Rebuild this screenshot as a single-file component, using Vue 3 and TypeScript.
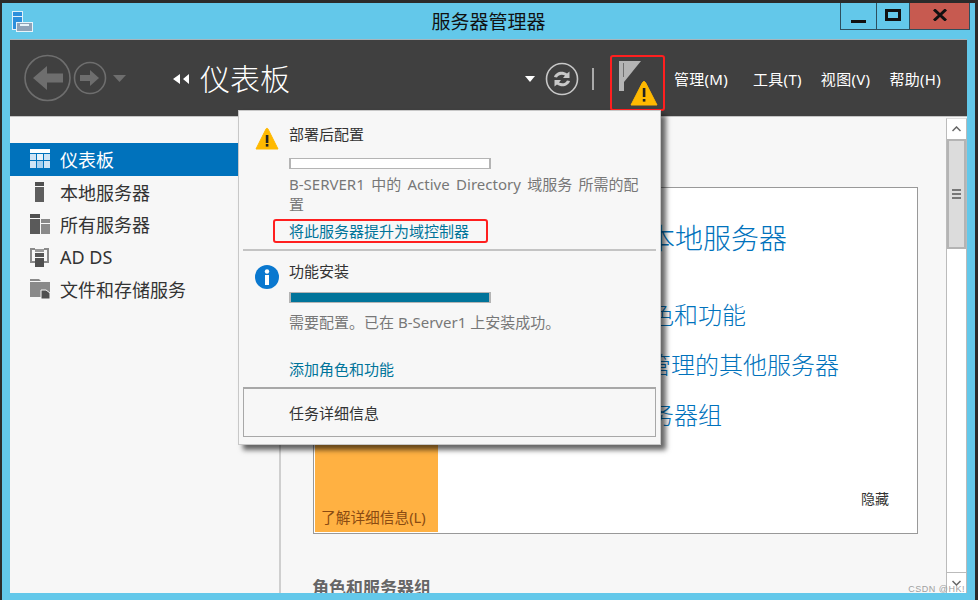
<script setup lang="ts">
const sideItems = [
  { name: '仪表板', icon: 'dash', active: true },
  { name: '本地服务器', icon: 'local', active: false },
  { name: '所有服务器', icon: 'all', active: false },
  { name: 'AD DS', icon: 'ad', active: false },
  { name: '文件和存储服务', icon: 'file', active: false },
]
const menus = ['管理(M)', '工具(T)', '视图(V)', '帮助(H)']
</script>

<template>
  <div class="window">
    <header class="titlebar">
      <svg class="app-icon" width="21" height="21" viewBox="0 0 21 21">
        <rect x="0.5" y="0.5" width="10" height="18" fill="#2c8fdc" stroke="#dff1fa" />
        <rect x="1" y="5" width="9" height="1" fill="#dff1fa" />
        <rect x="4.5" y="11.5" width="16" height="9" fill="#8fa3b8" stroke="#e8f4fa" />
        <rect x="8" y="13" width="9" height="2" fill="#e8f4fa" />
      </svg>
      <div class="title">服务器管理器</div>
      <div class="win-btns">
        <div class="win-btn min"><span class="min-glyph"></span></div>
        <div class="win-btn max"><span class="max-glyph"></span></div>
        <div class="win-btn close">
          <svg width="14" height="12" viewBox="0 0 14 12"><path d="M1 0.5L13 11.5M13 0.5L1 11.5" stroke="#111" stroke-width="3" /></svg>
        </div>
      </div>
    </header>

    <nav class="navbar">
      <svg class="history" width="106" height="50" viewBox="0 0 106 50">
        <circle cx="23.5" cy="25" r="22.5" fill="none" stroke="#6e6e6e" stroke-width="1.6" />
        <path d="M9 25L23 13V20.5H39V29.5H23V37Z" fill="#6e6e6e" />
        <circle cx="66" cy="25" r="15.5" fill="none" stroke="#6e6e6e" stroke-width="1.6" />
        <path d="M75 25L66 17V22H56V28H66V33Z" fill="#6e6e6e" />
        <path d="M89 22H102L95.500 29Z" fill="#6e6e6e" />
      </svg>
      <svg class="crumb-arrows" width="16" height="10" viewBox="0 0 16 10">
        <path d="M7 0V10L0 5ZM16 0V10L10 5Z" fill="#fff" />
      </svg>
      <div class="crumb">仪表板</div>
      <div class="nav-right">
        <svg class="refresh-caret" width="10" height="6" viewBox="0 0 10 6"><path d="M0 0H10L5 6Z" fill="#fff" /></svg>
        <svg class="refresh" width="34" height="34" viewBox="0 0 34 34">
          <circle cx="17" cy="17" r="15.500" fill="none" stroke="#c8c8c8" stroke-width="1.600" />
          <path d="M9 15C10.500 10 17 8 22 11.500L24.500 9.500V16H18L20 13.500C17 12 13.500 12.500 12 15.500Z" fill="#c8c8c8" />
          <path d="M25 19C23.500 24 17 26 12 22.500L9.500 24.500V18H16L14 20.500C17 22 20.500 21.500 22 18.500Z" fill="#c8c8c8" />
        </svg>
        <span class="sep"></span>
        <div class="flag-box">
          <svg width="48" height="49" viewBox="0 0 48 49">
            <path d="M6 3H11V33H6Z" fill="#b4b4b4" />
            <rect x="10" y="5" width="1" height="14" fill="#707070" />
            <path d="M11 3H28L11 24Z" fill="#b4b4b4" />
            <path d="M18 47L29.500 24.500C30.200 23.200 31.800 23.200 32.500 24.500L44 47Z" fill="#ffb900" stroke="#ffb900" stroke-linejoin="round" />
            <rect x="29.800" y="30" width="2.600" height="9" fill="#222" />
            <rect x="29.800" y="41" width="2.600" height="2.600" fill="#222" />
          </svg>
        </div>
        <div class="menus">
          <span v-for="m in menus" :key="m" class="menu">{{ m }}</span>
        </div>
      </div>
    </nav>

    <div class="body">
      <aside class="sidebar">
        <div v-for="item in sideItems" :key="item.name" class="side-item" :class="{ active: item.active }">
          <svg class="side-icon" width="20" height="20" viewBox="0 0 20 20">
            <template v-if="item.icon === 'dash'">
              <rect x="0" y="0" width="20" height="4" fill="#fff" />
              <rect x="0" y="5" width="6" height="6" fill="#cfe4f5" />
              <rect x="7" y="5" width="6" height="6" fill="#e8f2fa" />
              <rect x="14" y="5" width="6" height="6" fill="#cfe4f5" />
              <rect x="0" y="12" width="6" height="7" fill="#cfe4f5" />
              <rect x="7" y="12" width="6" height="7" fill="#a9d0ee" />
              <rect x="14" y="12" width="6" height="7" fill="#cfe4f5" />
            </template>
            <template v-else-if="item.icon === 'local'">
              <rect x="5" y="0" width="9" height="4" fill="#505050" />
              <rect x="5" y="5" width="9" height="15" fill="#5e5e5e" />
            </template>
            <template v-else-if="item.icon === 'all'">
              <rect x="0" y="0" width="10" height="4" fill="#505050" />
              <rect x="0" y="5" width="10" height="15" fill="#5a5a5a" />
              <rect x="11" y="5" width="9" height="4" fill="#888" />
              <rect x="11" y="10" width="9" height="10" fill="#8a8a8a" />
            </template>
            <template v-else-if="item.icon === 'ad'">
              <path d="M0 1H5V3H2V14H5V16H0ZM14 1H19V16H14V14H17V3H14Z" fill="#8a8a8a" />
              <rect x="5" y="2" width="9" height="3" fill="#999" />
              <rect x="5" y="6" width="9" height="4" fill="#555" />
              <rect x="5" y="11" width="9" height="9" fill="#505050" />
            </template>
            <template v-else>
              <path d="M0 0H9L11 2H0Z" fill="#8a8a8a" />
              <rect x="0" y="3" width="20" height="15" fill="#8a8a8a" />
              <path d="M11 11H16L20 14V20H11Z" fill="#505050" stroke="#f7f7f7" />
            </template>
          </svg>
          <span>{{ item.name }}</span>
        </div>
      </aside>

      <main class="content">
        <section class="welcome">
          <div class="tile">了解详细信息(L)</div>
          <div class="welcome-body">
            <div class="quick-title">配置此本地服务器</div>
            <div class="quick-link">添加角色和功能</div>
            <div class="quick-link">添加要管理的其他服务器</div>
            <div class="quick-link">创建服务器组</div>
            <div class="hide-link">隐藏</div>
          </div>
        </section>
        <h2 class="group-head">角色和服务器组</h2>
      </main>

      <div class="scrollbar">
        <div class="sb-btn">
          <svg width="9" height="6" viewBox="0 0 9 6"><path d="M0.500 5L4.500 1L8.500 5" fill="none" stroke="#666" stroke-width="1.500" /></svg>
        </div>
        <div class="sb-thumb"><span></span><span></span><span></span></div>
        <div class="sb-track"></div>
        <div class="sb-btn down">
          <svg width="9" height="6" viewBox="0 0 9 6"><path d="M0.500 1L4.500 5L8.500 1" fill="none" stroke="#666" stroke-width="1.500" /></svg>
        </div>
      </div>
    </div>

    <div class="popup">
      <div class="note first">
        <svg class="note-icon" width="24" height="23" viewBox="0 0 24 23">
          <path d="M1 22L11 2C11.500 1 12.500 1 13 2L23 22Z" fill="#ffb900" stroke="#ffb900" stroke-linejoin="round" />
          <rect x="10.800" y="8" width="2.600" height="8" fill="#222" />
          <rect x="10.800" y="17" width="2.600" height="2.600" fill="#222" />
        </svg>
        <div class="note-body">
          <div class="note-title">部署后配置</div>
          <div class="bar"></div>
          <p class="note-text">B-SERVER1 中的 Active Directory 域服务 所需的配置</p>
          <div class="promote"><span class="link">将此服务器提升为域控制器</span></div>
        </div>
      </div>
      <div class="divider"></div>
      <div class="note second">
        <svg class="note-icon" width="24" height="24" viewBox="0 0 24 24">
          <circle cx="12" cy="12" r="12" fill="#0a78cf" />
          <rect x="10" y="10" width="4" height="10" fill="#fff" />
          <circle cx="12" cy="6.500" r="2.200" fill="#fff" />
        </svg>
        <div class="note-body">
          <div class="note-title">功能安装</div>
          <div class="bar full"></div>
          <p class="note-text">需要配置。已在 B-Server1 上安装成功。</p>
          <div class="add-role"><span class="link">添加角色和功能</span></div>
        </div>
      </div>
      <div class="task-details">任务详细信息</div>
    </div>

    <div class="watermark">CSDN @HK!</div>
  </div>
</template>

<style>
html, body {
  margin: 0;
  background: #2b2b2b;
}
</style>

<style scoped>
.window {
  position: relative;
  box-sizing: border-box;
  width: 978px;
  height: 600px;
  padding: 0 8px 7px;
  margin: 0;
  border-top: 3px solid #2b2b2b;
  border-left: 2px solid #2b2b2b;
  border-right: 3px solid #2b2b2b;
  background: #63c8ea;
  display: flex;
  flex-direction: column;
  overflow: hidden;
  font-family: "Noto Sans", "Noto Sans CJK SC", sans-serif;
  color: #333;
}

.titlebar {
  position: relative;
  height: 36px;
  flex: none;
  display: flex;
  justify-content: center;
  align-items: flex-start;
}

.app-icon {
  position: absolute;
  left: 2px;
  top: 8px;
}

.title {
  font-size: 19px;
  line-height: 38px;
  color: #111;
}

.win-btns {
  position: absolute;
  right: -3px;
  top: 0;
  display: flex;
  height: 27px;
}

.win-btn {
  box-sizing: border-box;
  height: 27px;
  border: 1px solid #2d4f5e;
  border-top: 0;
  display: flex;
  align-items: center;
  justify-content: center;
}

.min {
  width: 37px;
  align-items: flex-end;
  padding-bottom: 6px;
}

.min-glyph {
  width: 15px;
  height: 3px;
  background: #111;
}

.max {
  width: 33px;
  border-left: 0;
}

.max-glyph {
  box-sizing: border-box;
  width: 16px;
  height: 12px;
  border: 3px solid #111;
  margin-top: -3px;
}

.close {
  width: 60px;
  border-left: 0;
  background: #c75a50;
  padding-bottom: 2px;
}

.navbar {
  flex: none;
  height: 78px;
  box-sizing: border-box;
  border-top: 1px solid #a8b4ba;
  border-bottom: 1px solid #c4c4c4;
  background: #404040;
  display: flex;
  align-items: center;
  color: #fff;
}

.history {
  margin-left: 14px;
  flex: none;
}

.crumb-arrows {
  margin-left: 43px;
  margin-top: 2px;
}

.crumb {
  margin-left: 11px;
  font-size: 30px;
  font-weight: 300;
  line-height: 40px;
  margin-top: 2px;
}

.nav-right {
  margin-left: auto;
  display: flex;
  align-items: center;
  margin-top: 2px;
}

.refresh {
  margin-left: 10px;
}

.sep {
  width: 2px;
  height: 22px;
  background: #aaa;
  margin-left: 13px;
}

.flag-box {
  box-sizing: border-box;
  width: 55px;
  height: 56px;
  margin-left: 16px;
  border: 2.500px solid #ff1f1f;
  border-radius: 3px;
  display: flex;
  align-items: center;
  justify-content: center;
  margin-top: 7px;
}

.menus {
  display: flex;
  margin-left: 9px;
  margin-right: 26px;
  gap: 19px;
  font-size: 15px;
  letter-spacing: 0.300px;
  line-height: 20px;
}

.menu:first-child {
  margin-right: 6px;
}

.body {
  flex: 1;
  min-height: 0;
  display: flex;
  background: #f7f7f7;
}

.sidebar {
  box-sizing: border-box;
  width: 271px;
  flex: none;
  padding-top: 26px;
  border-right: 2px solid #cfcfcf;
}

.side-item {
  height: 32.500px;
  display: flex;
  align-items: center;
  padding-left: 20px;
  font-size: 18px;
  color: #333;
}

.side-item.active {
  background: #0072bc;
  color: #fff;
}

.side-icon {
  margin-right: 10px;
  flex: none;
}

.content {
  flex: 1;
  min-width: 0;
  padding: 70px 28px 0 32px;
  overflow: hidden;
}

.welcome {
  box-sizing: border-box;
  width: 605px;
  height: 347px;
  border: 1px solid #999;
  padding: 1px;
  background: #fff;
  display: flex;
}

.tile {
  box-sizing: border-box;
  width: 123px;
  flex: none;
  background: #ffb142;
  color: #8a4b12;
  font-size: 14.700px;
  line-height: 20px;
  padding: 0 0 5px 6px;
  display: flex;
  align-items: flex-end;
}

.welcome-body {
  flex: 1;
  position: relative;
  padding: 29px 0 0 136px;
  display: flex;
  flex-direction: column;
  color: #0072bc;
}

.quick-title {
  font-size: 28px;
  font-weight: 300;
  line-height: 40px;
  margin-left: -11px;
  margin-bottom: 40px;
}

.quick-link {
  font-size: 24px;
  font-weight: 300;
  line-height: 34px;
  margin-bottom: 16px;
  margin-left: 4px;
}

.quick-link:nth-of-type(3) {
  margin-left: 1px;
}

.hide-link {
  margin-top: auto;
  margin-bottom: 23px;
  align-self: flex-end;
  margin-right: 27px;
  font-size: 14px;
  line-height: 20px;
  color: #333;
}

.group-head {
  margin: 42px 0 0 -1px;
  font-size: 17px;
  line-height: 24px;
  font-weight: 700;
  color: #666;
}

.scrollbar {
  box-sizing: border-box;
  width: 21px;
  flex: none;
  margin-top: 1px;
  border-left: 1px solid #bbb;
  border-right: 1px solid #bbb;
  border-top: 1px solid #ddd;
  background: #fff;
  display: flex;
  flex-direction: column;
}

.sb-btn {
  height: 20px;
  flex: none;
  display: flex;
  align-items: center;
  justify-content: center;
}

.sb-btn.down {
  border-top: 1px solid #bbb;
  height: 20px;
}

.sb-thumb {
  box-sizing: border-box;
  height: 110px;
  flex: none;
  border: 2px solid #b4b4b4;
  background: #dcdcdc;
  display: flex;
  flex-direction: column;
  align-items: center;
  justify-content: center;
  gap: 2px;
}

.sb-thumb span {
  width: 9px;
  height: 2px;
  background: #777;
}

.sb-track {
  flex: 1;
}

.popup {
  position: absolute;
  left: 236px;
  top: 107px;
  box-sizing: border-box;
  width: 423px;
  height: 335px;
  border: 1px solid #c8c8c8;
  background: #f7f7f7;
  box-shadow: 5px 5px 5px rgba(0, 0, 0, 0.6);
  padding: 0 4px 7px;
  display: flex;
  flex-direction: column;
}

.note {
  display: flex;
  padding-left: 12px;
}

.first {
  padding-top: 15px;
  height: 138px;
  box-sizing: border-box;
}

.first .note-icon {
  margin-top: 1px;
}

.second {
  padding-top: 14px;
  flex: 1;
}

.note-icon {
  flex: none;
  margin-right: 10px;
}

.note-body {
  flex: 1;
  min-width: 0;
}

.note-title {
  font-size: 15px;
  line-height: 16px;
  color: #333;
  margin-bottom: 16px;
}

.second .note-title {
  margin-bottom: 13px;
  margin-top: -2px;
}

.bar {
  box-sizing: border-box;
  width: 202px;
  height: 11px;
  border: 2px solid #b4b4b4;
  border-width: 1.500px 2px;
  background: #fff;
}

.bar.full {
  background: #00749a;
}

.note-text {
  margin: 6px 0 0;
  max-width: 352px;
  font-size: 15px;
  line-height: 19.500px;
  color: #777;
}

.first .note-text {
  word-spacing: 2.500px;
}

.second .note-text {
  margin-top: 10px;
}

.link {
  font-size: 15px;
  line-height: 20px;
  color: #00749a;
}

.promote {
  box-sizing: border-box;
  width: 215px;
  height: 24px;
  margin: 5px 0 0 -16px;
  padding-left: 14px;
  border: 2.500px solid #ff1f1f;
  border-radius: 3px;
  display: flex;
  align-items: center;
}

.divider {
  height: 2px;
  background: #c4c4c4;
  flex: none;
}

.add-role {
  margin-top: 25px;
}

.task-details {
  box-sizing: border-box;
  height: 50px;
  flex: none;
  border: 1px solid #a8a8a8;
  border-top-width: 2px;
  padding-left: 45px;
  display: flex;
  align-items: center;
  font-size: 15px;
  color: #333;
}

.watermark {
  position: absolute;
  right: 10px;
  bottom: 6px;
  font-family: "Liberation Sans", sans-serif;
  font-size: 9px;
  letter-spacing: 0.500px;
  color: #a0a0a0;
}
</style>
